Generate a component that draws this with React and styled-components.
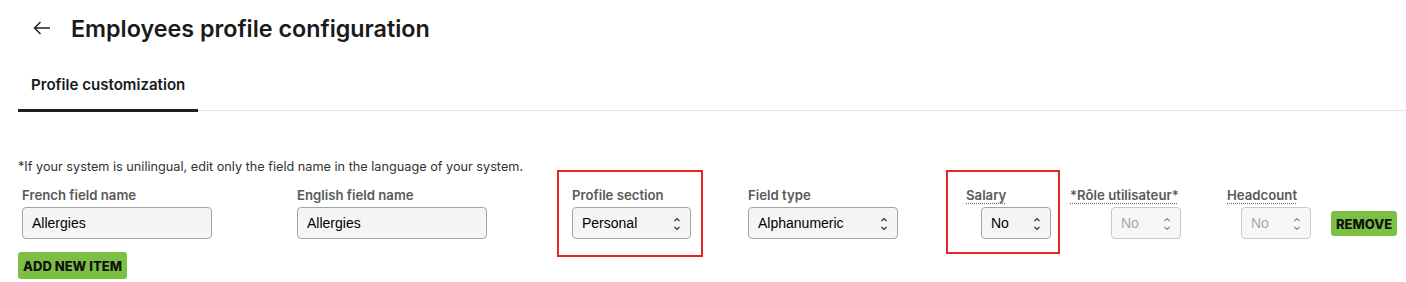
import React from 'react';
import styled, { createGlobalStyle } from 'styled-components';

const GlobalStyle = createGlobalStyle`
  body {
    margin: 0;
    background: #ffffff;
    font-family: 'Inter', 'Open Sans', sans-serif;
    color: #1f1f1f;
  }
`;

const Page = styled.div`
  width: 1406px;
  height: 282px;
  overflow: hidden;
`;

const Header = styled.div`
  display: flex;
  align-items: center;
  gap: 20px;
  height: 56px;
  padding-left: 33px;
`;

const BackButton = styled.button`
  display: flex;
  align-items: center;
  background: none;
  border: none;
  padding: 0;
  color: #222;
  cursor: pointer;
`;

const Title = styled.h1`
  margin: 0;
  font-size: 23.3px;
  font-weight: 600;
  color: #1a1a1a;
`;

const Tabs = styled.div`
  display: flex;
  margin: 4px 0 0 18px;
  border-bottom: 1px solid #e2e2e2;
`;

const Tab = styled.div`
  padding: 0 13px;
  height: 49px;
  display: flex;
  align-items: center;
  font-size: 15.1px;
  font-weight: 600;
  color: #1a1a1a;
  border-bottom: 3px solid ${(p) => (p.active ? '#1e1e1e' : 'transparent')};
  margin-bottom: -2px;
`;

const Content = styled.div`
  padding: 48px 0 0 18px;
`;

const Note = styled.p`
  margin: 0 0 8px;
  font-size: 12.7px;
  color: #333;
`;

const FieldsRow = styled.div`
  display: flex;
  align-items: flex-start;
  padding-left: 4px;
  margin-top: -12px;
`;

const Field = styled.div`
  display: flex;
  flex-direction: column;
  margin-left: ${(p) => p.offset || 0}px;
  padding-top: 17px;
`;

const Highlight = styled.div`
  display: flex;
  flex-direction: column;
  border: 2px solid #e3262a;
  margin-left: ${(p) => p.offset || 0}px;
  padding: 15px ${(p) => p.pr}px ${(p) => p.pb}px ${(p) => p.pl}px;
`;

const Label = styled.span`
  font-size: 13.2px;
  font-weight: 600;
  color: #5a5a5a;
  line-height: 16px;
  margin-bottom: 4px;
  white-space: nowrap;
  text-decoration: ${(p) => (p.dotted ? 'underline dotted #777' : 'none')};
  text-underline-offset: 3px;
  align-self: flex-start;
`;

const TextInput = styled.input`
  box-sizing: border-box;
  width: 190px;
  height: 32px;
  padding: 0 9px;
  border: 1px solid #a3a3a3;
  border-radius: 4px;
  background: #f5f5f5;
  font-family: 'Liberation Sans', Arial, sans-serif;
  font-size: 14px;
  color: #000;
  outline: none;
`;

const SelectBox = styled.div`
  position: relative;
  box-sizing: border-box;
  width: ${(p) => p.width}px;
  height: 32px;
  margin-left: ${(p) => p.indent || 0}px;
  padding-left: 9px;
  display: flex;
  align-items: center;
  border: 1px solid ${(p) => (p.disabled ? '#c9c9c9' : '#a3a3a3')};
  border-radius: 4px;
  background: ${(p) => (p.disabled ? '#f7f7f7' : '#f5f5f5')};
  font-family: 'Liberation Sans', Arial, sans-serif;
  font-size: 14px;
  color: ${(p) => (p.disabled ? '#a8a8a8' : '#000')};
`;

const Chevrons = styled.svg`
  position: absolute;
  right: 9px;
  top: 9px;
`;

const GreenButton = styled.button`
  display: block;
  box-sizing: border-box;
  height: ${(p) => p.h}px;
  width: ${(p) => p.w}px;
  padding: 0;
  margin-left: ${(p) => p.offset || 0}px;
  margin-top: ${(p) => p.top || 0}px;
  background: #7bc043;
  border: none;
  border-radius: 3px;
  font-family: 'Inter', sans-serif;
  font-size: 13px;
  font-weight: 800;
  color: #111;
  cursor: pointer;
`;

const Select = ({ value, width, indent, disabled }) => (
  <SelectBox width={width} indent={indent} disabled={disabled}>
    {value}
    <Chevrons width="8" height="14" viewBox="0 0 8 14" fill="none">
      <path d="M1.5 4 L4 1.5 L6.5 4" stroke={disabled ? '#888' : '#333'} strokeWidth="1.2" />
      <path d="M1.5 10 L4 12.5 L6.5 10" stroke={disabled ? '#888' : '#333'} strokeWidth="1.2" />
    </Chevrons>
  </SelectBox>
);

const App = () => {
  return (
    <Page>
      <GlobalStyle />
      <Header>
        <BackButton>
          <svg width="18" height="14" viewBox="0 0 18 14" fill="none">
            <path d="M17 7 H1.5 M7.5 1 L1.5 7 L7.5 13" stroke="#222" strokeWidth="1.5" />
          </svg>
        </BackButton>
        <Title>Employees profile configuration</Title>
      </Header>
      <Tabs>
        <Tab active>Profile customization</Tab>
      </Tabs>
      <Content>
        <Note>*If your system is unilingual, edit only the field name in the language of your system.</Note>
        <FieldsRow>
          <Field>
            <Label>French field name</Label>
            <TextInput defaultValue="Allergies" />
          </Field>
          <Field offset={85}>
            <Label>English field name</Label>
            <TextInput defaultValue="Allergies" />
          </Field>
          <Highlight offset={70} pl={13} pr={10} pb={16}>
            <Label>Profile section</Label>
            <Select value="Personal" width={119} />
          </Highlight>
          <Field offset={45}>
            <Label>Field type</Label>
            <Select value="Alphanumeric" width={150} />
          </Field>
          <Highlight offset={48} pl={18} pr={7} pb={13}>
            <Label dotted>Salary</Label>
            <Select value="No" width={70} indent={15} />
          </Highlight>
          <Field offset={10}>
            <Label dotted>*Rôle utilisateur*</Label>
            <Select value="No" width={70} indent={41} disabled />
          </Field>
          <Field offset={46}>
            <Label dotted>Headcount</Label>
            <Select value="No" width={70} indent={14} disabled />
          </Field>
          <GreenButton h={25} w={66} offset={20} top={41}>REMOVE</GreenButton>
        </FieldsRow>
        <GreenButton h={27} w={109} top={-5}>ADD NEW ITEM</GreenButton>
      </Content>
    </Page>
  );
};

export default App;
